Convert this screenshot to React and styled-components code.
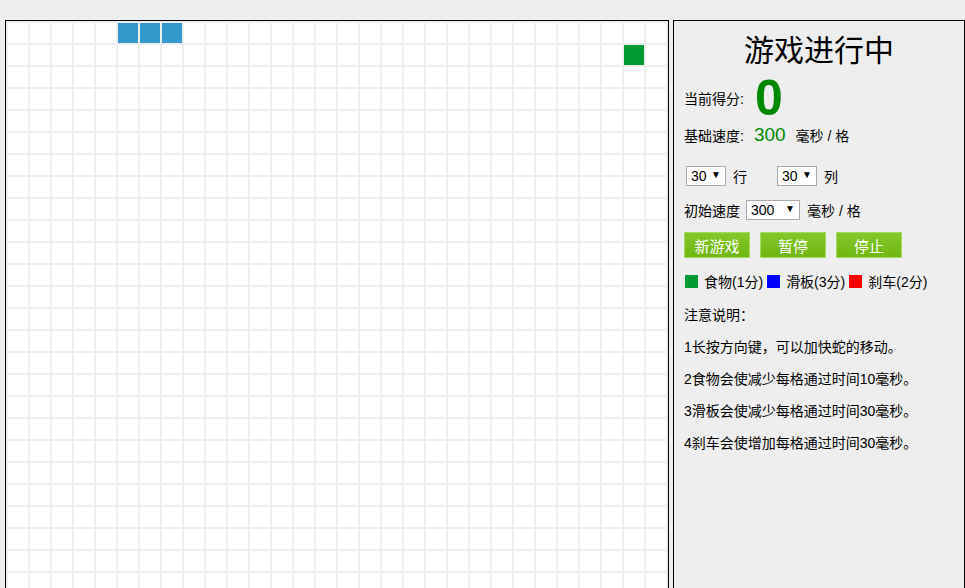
import React from 'react';
import styled, { createGlobalStyle } from 'styled-components';

const ROWS = 30;
const COLS = 30;
const snake = [
  [0, 5],
  [0, 6],
  [0, 7],
];
const food = [1, 28];

const GlobalStyle = createGlobalStyle`
  html, body {
    margin: 0;
    padding: 0;
    background: #eeeeee;
    overflow: hidden;
  }
  body {
    font-family: "Liberation Sans", "Noto Sans CJK SC", sans-serif;
    font-size: 14px;
    color: #000;
  }
`;

const Page = styled.div`
  display: flex;
  align-items: stretch;
  gap: 4px;
  padding: 20px 0 0 5px;
`;

const Board = styled.div`
  display: grid;
  grid-template-columns: repeat(${(p) => p.cols}, 20px);
  grid-auto-rows: 20px;
  gap: 2px;
  padding: 2px;
  border: 1px solid #000;
  background: #eeeeee;
`;

const Cell = styled.div`
  background: ${(p) =>
    p.kind === 'snake' ? '#3399cc' : p.kind === 'food' ? '#009933' : '#ffffff'};
`;

const Panel = styled.div`
  width: 280px;
  border: 1px solid #000;
  background: #eeeeee;
  padding: 0 0 0 10px;
`;

const Title = styled.h1`
  margin: 10px 0 0 -10px;
  height: 40px;
  line-height: 40px;
  text-align: center;
  font-family: "Liberation Serif", "Noto Sans CJK SC", serif;
  font-size: 30px;
  font-weight: normal;
`;

const Row = styled.div`
  display: flex;
  align-items: center;
  height: ${(p) => p.h || 22}px;
  margin-top: ${(p) => p.mt || 0}px;
  gap: ${(p) => p.gap || 0}px;
`;

const Score = styled.span`
  font-size: 50px;
  font-weight: bold;
  color: #008800;
  margin-left: 11px;
  line-height: 1;
`;

const Speed = styled.span`
  font-size: 19px;
  color: #008800;
  margin: 0 10px 0 10px;
`;

const SelectWrap = styled.span`
  position: relative;
  display: inline-block;
  margin: ${(p) => p.m || '0'};
  &::after {
    content: '▼';
    position: absolute;
    right: 5px;
    top: 3px;
    font-size: 10px;
    pointer-events: none;
  }
`;

const Select = styled.select`
  appearance: none;
  -webkit-appearance: none;
  width: ${(p) => p.w}px;
  height: 20px;
  box-sizing: border-box;
  border: 1px solid #a9a9a9;
  border-radius: 0;
  background: #fff;
  padding: 0 0 0 4px;
  font-family: "Liberation Sans", sans-serif;
  font-size: 14px;
  color: #000;
  outline: none;
`;

const Button = styled.button`
  width: 66px;
  height: 26px;
  padding: 0;
  border: 1px solid #a6da5e;
  background: linear-gradient(#84c72a, #6fb711);
  color: #fff;
  font-family: "Noto Sans CJK SC", sans-serif;
  font-size: 15px;
  cursor: pointer;
`;

const Swatch = styled.span`
  display: inline-block;
  width: 13px;
  height: 13px;
  background: ${(p) => p.color};
  margin: 0 6px 0 1px;
`;

const LegendItem = styled.span`
  display: inline-flex;
  align-items: center;
  margin-right: 3px;
`;

const Notes = styled.div`
  margin-top: 7px;
`;

const Note = styled.p`
  margin: 0;
  height: 32px;
  line-height: 32px;
`;

function App() {
  const cells = [];
  for (let r = 0; r < ROWS; r++) {
    for (let c = 0; c < COLS; c++) {
      let kind = 'empty';
      if (snake.some(([sr, sc]) => sr === r && sc === c)) kind = 'snake';
      else if (food[0] === r && food[1] === c) kind = 'food';
      cells.push(<Cell key={r + '-' + c} kind={kind} />);
    }
  }

  return (
    <>
      <GlobalStyle />
      <Page>
        <Board cols={COLS}>{cells}</Board>
        <Panel>
          <Title>游戏进行中</Title>
          <Row h={54}>
            当前得分:<Score>0</Score>
          </Row>
          <Row h={20}>
            基础速度:<Speed>300</Speed>毫秒 / 格
          </Row>
          <Row h={24} mt={19}>
            <SelectWrap m="0 7px 0 2px">
              <Select w={40} defaultValue="30">
                <option>20</option>
                <option>30</option>
                <option>40</option>
              </Select>
            </SelectWrap>
            行
            <SelectWrap m="0 7px 0 30px">
              <Select w={40} defaultValue="30">
                <option>20</option>
                <option>30</option>
                <option>40</option>
              </Select>
            </SelectWrap>
            列
          </Row>
          <Row h={22} mt={11}>
            初始速度
            <SelectWrap m="0 7px 0 6px">
              <Select w={54} defaultValue="300">
                <option>200</option>
                <option>300</option>
                <option>500</option>
              </Select>
            </SelectWrap>
            毫秒 / 格
          </Row>
          <Row h={26} mt={11} gap={10}>
            <Button>新游戏</Button>
            <Button>暂停</Button>
            <Button>停止</Button>
          </Row>
          <Row h={22} mt={12}>
            <LegendItem>
              <Swatch color="#009933" />
              食物(1分)
            </LegendItem>
            <LegendItem>
              <Swatch color="#0000ff" />
              滑板(3分)
            </LegendItem>
            <LegendItem>
              <Swatch color="#ff0000" />
              刹车(2分)
            </LegendItem>
          </Row>
          <Notes>
            <Note>注意说明：</Note>
            <Note>1长按方向键，可以加快蛇的移动。</Note>
            <Note>2食物会使减少每格通过时间10毫秒。</Note>
            <Note>3滑板会使减少每格通过时间30毫秒。</Note>
            <Note>4刹车会使增加每格通过时间30毫秒。</Note>
          </Notes>
        </Panel>
      </Page>
    </>
  );
}

export default App;
